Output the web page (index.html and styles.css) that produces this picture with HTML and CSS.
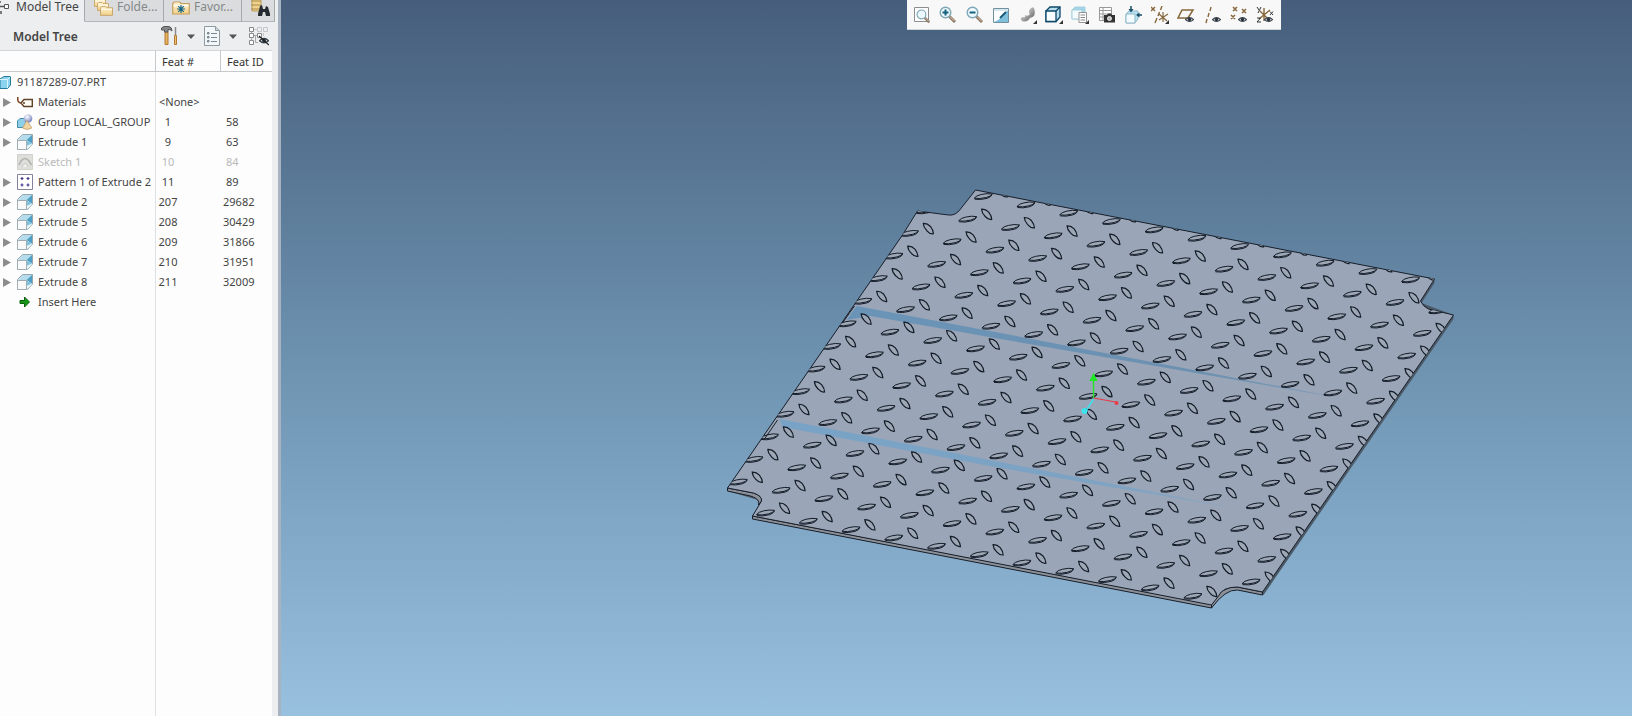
FILE: index.html
```
<!DOCTYPE html>
<html lang="en">
<head>
<meta charset="utf-8">
<title>91187289-07.PRT</title>
<link rel="stylesheet" href="styles.css">
</head>
<body>
<svg class="defs" aria-hidden="true">
  <defs>
    <linearGradient id="blueFace" x1="0" y1="0" x2="1" y2="1"><stop offset="0" stop-color="#d9f2fa"/><stop offset="1" stop-color="#4aa3c9"/></linearGradient>
    <linearGradient id="gold" x1="0" y1="0" x2="0" y2="1"><stop offset="0" stop-color="#fff6d8"/><stop offset="1" stop-color="#f3cf85"/></linearGradient>
    <linearGradient id="grey" x1="0" y1="0" x2="1" y2="1"><stop offset="0" stop-color="#f8f8f8"/><stop offset="1" stop-color="#555"/></linearGradient>
    <radialGradient id="ball" cx=".4" cy=".3" r=".7"><stop offset="0" stop-color="#fff"/><stop offset="1" stop-color="#7480c0"/></radialGradient>
    <symbol id="extrude" viewBox="0 0 16 16">
      <path d="M.5 5.500 5.500 .5H15.500V10L10.500 15.500H.5Z" fill="#e3eef2" stroke="#93a7ae"/>
      <path d="M5.500 1H15L9.500 6H1.500Z" fill="#b4dcec"/>
      <path d="M15 1V9.500L9.500 6Z" fill="#4f9fc4"/>
      <path d="M9 6 15 9.500 10 15Z" fill="#7fc2de"/>
      <path d="M9.500 12 15 9.500V10L10.500 15Z" fill="#eef8fb"/>
      <path d="M.5 6.500H9.500V15.500H.5Z" fill="#fafafa" stroke="#a0adb2"/>
    </symbol>
    <symbol id="arrow" viewBox="0 0 8 9"><path d="M0 0 8 4.500 0 9Z" fill="#8c8c8c"/></symbol>
    <symbol id="mag" viewBox="0 0 18 18">
      <path d="M10.500 10.500 16 16" stroke="#8b7663" stroke-width="3"/><path d="M11 10.500 15.500 15" stroke="#e4d0b4"/>
      <circle cx="6.500" cy="6.500" r="5.300" fill="#edf9fe" stroke="#7fa6b5" stroke-width="1.400"/>
    </symbol>
    <symbol id="eye" viewBox="0 0 10 7">
      <path d="M.5 3.700Q5-.8 9.500 3.700 5 7.700.5 3.700Z" fill="#eee" stroke="#39424b" stroke-width="1.300"/><circle cx="5" cy="3.500" r="1.900" fill="#28323c"/>
    </symbol>
    <symbol id="folder" viewBox="0 0 12 9">
      <path d="M.5 8.500V1.500L1.500 .5H5L6 1.500H11.500V8.500Z" fill="url(#gold)" stroke="#c39d5f" stroke-width=".8"/><path d="M1 3H11" stroke="#fffbea"/>
    </symbol>
  </defs>
</svg>
<div class="app">
  <aside class="side">
    <div class="panel">
      <div class="tabs" role="tablist">
        <button class="tab tab-model active" role="tab" aria-selected="true">
          <svg width="10" height="14" viewBox="0 0 10 14"><path d="M0 1V3M0 6.500H4M1 11V14" stroke="#555" stroke-width="1.500"/><path d="M4.500 4.500H8.500V8.500H4.500Z" fill="#fff" stroke="#555"/></svg>
          <span>Model Tree</span>
        </button>
        <button class="tab tab-folder" role="tab">
          <svg width="19" height="18" viewBox="0 0 19 18"><use href="#folder" width="12" height="9"/><use href="#folder" x="3" y="4" width="12" height="9"/><use href="#folder" x="6" y="8" width="13" height="10"/></svg>
          <span>Folde...</span>
        </button>
        <button class="tab tab-fav" role="tab">
          <svg width="18" height="18" viewBox="0 0 18 18"><use href="#folder" y="3" width="18" height="14"/><path d="M9 7V15M5 11H13M6.200 8.200 11.800 13.800M11.800 8.200 6.200 13.800" stroke="#176789" stroke-width="1.200"/></svg>
          <span>Favor...</span>
        </button>
        <button class="tab tab-find" role="tab" aria-label="Search">
          <svg width="20" height="20" viewBox="0 0 20 20"><path d="M2 0H11V14H2Z" fill="#efd38d" stroke="#b99a5c"/><path d="M1 4H11M1 8H11M1 12H9" stroke="#a98a4c"/><path d="M10 9 12 8 13 12H15L16 9 18 10 20 17V19H16L15 15H13L12 19H8V17Z" fill="#252b30"/></svg>
        </button>
      </div>
      <header class="head">
        <h1>Model Tree</h1>
        <div class="tools">
          <button aria-label="Settings"><svg width="18" height="20" viewBox="0 0 18 20"><path d="M4 6H7V18.500H4Z" fill="#e8b25c" stroke="#b07a35"/><path d="M.5 2 3 .5H8Q11 1 11 5L9 3.500H7V6H3.500V4H.5Z" fill="#888" stroke="#555"/><path d="M14.500 1V9" stroke="#888" stroke-width="1.500"/><path d="M13.500 9.500H15.500V18.500H13.500Z" fill="#efbe70" stroke="#b07a35"/></svg></button>
          <button class="drop" aria-label="Settings menu"><svg width="8" height="5" viewBox="0 0 8 5"><path d="M0 .5H8L4 5Z" fill="#555"/></svg></button>
          <button class="show" aria-label="Show"><svg width="17" height="20" viewBox="0 0 17 20"><path d="M.5 .5H11.500L15.500 4.500V19.500H.5Z" fill="#f3f7f9" stroke="#8f9ba3"/><path d="M11.500 .5V4.500H15.500" fill="#c9d3d8" stroke="#8f9ba3"/><path d="M7 7.500H13M7 11.500H13M7 15.500H13" stroke="#7b8b95"/><path d="M3.500 6.500H5V8H3.500ZM3.500 10.500H5V12H3.500ZM3.500 14.500H5V16H3.500Z" fill="#fff" stroke="#6d7f8b"/></svg></button>
          <button class="drop" aria-label="Show menu"><svg width="8" height="5" viewBox="0 0 8 5"><path d="M0 .5H8L4 5Z" fill="#555"/></svg></button>
          <button class="filter" aria-label="Tree filters"><svg width="20" height="20" viewBox="0 0 20 20"><g fill="#fff" stroke="#888"><path d="M.5 1.500H4.500V5.500H.5ZM.5 7.500H4.500V11.500H.5ZM.5 14.500H4.500V18.500H.5ZM8.500 7.500H12.500V11.500H8.500Z"/></g><g fill="none" stroke="#c4c7ca"><path d="M8.500 1.500H12.500V5.500H8.500ZM14.500 1.500H18.500V5.500H14.500ZM5 3.500H8M14.500 7V10"/></g><path d="M2.500 5.500V7.500M2.500 11.500V14.500M5 9.500H8M6.500 9.500V16.500H9" fill="none" stroke="#aaa"/><use href="#eye" x="10" y="11" width="10" height="7"/><path d="M10 10 20 19" stroke="#222" stroke-width="1.200"/></svg></button>
        </div>
      </header>
      <table class="tree">
        <colgroup><col class="c-name"><col class="c-num"><col class="c-id"></colgroup>
        <thead><tr><th aria-label="Name"></th><th>Feat #</th><th>Feat ID</th></tr></thead>
        <tbody>
          <tr class="root"><td><div class="node"><svg class="part" width="11" height="13" viewBox="0 0 11 13"><path d="M0 3 4 .5H10.500V9L7.500 12.500H0Z" fill="#8bd3ef" stroke="#247a9c"/><path d="M0 3.500H7.500V12M7.500 3.500 10.500 .5" fill="none" stroke="#d6f4ff"/></svg>91187289-07.PRT</div></td><td></td><td></td></tr>
          <tr><td><div class="node"><svg class="tw"><use href="#arrow"/></svg><svg class="ic" viewBox="0 0 16 16"><path d="M.8 3V6Q1 9 5 9" fill="none" stroke="#79421d" stroke-width="1.500"/><path d="M4 9 7 5.500H15.300V12.500H7Z" fill="#fffdf6" stroke="#60432b" stroke-width="1.400"/><circle cx="7" cy="9" r="1" fill="#60432b"/></svg>Materials</div></td><td class="none">&lt;None&gt;</td><td></td></tr>
          <tr><td><div class="node"><svg class="tw"><use href="#arrow"/></svg><svg class="ic" viewBox="0 0 16 16"><path d="M.5 7 3 4.500H9V11L7 13.500H.5Z" fill="#8fd0e9" stroke="#438aa7"/><circle cx="11" cy="4.500" r="4.300" fill="url(#ball)"/><path d="M10 6.500 14.800 14Q10 17 5.500 14Z" fill="#f0d5a0" stroke="#b79762" stroke-width=".7"/></svg>Group LOCAL_GROUP</div></td><td><span class="num">1</span></td><td class="short">58</td></tr>
          <tr><td><div class="node"><svg class="tw"><use href="#arrow"/></svg><svg class="ic"><use href="#extrude"/></svg>Extrude 1</div></td><td><span class="num">9</span></td><td class="short">63</td></tr>
          <tr class="off"><td><div class="node"><svg class="tw"></svg><svg class="ic" viewBox="0 0 16 16"><path d="M.5 .5H15.500V15.500H.5Z" fill="#dededa" stroke="#d2d2cd"/><path d="M2 11 4 7Q8 2 12 7L14.500 11" fill="none" stroke="#b0b0ad" stroke-width="1.500"/><path d="M5 13Q8 6 11 13" fill="#f2f2f0" stroke="#c4c4c0"/></svg>Sketch 1</div></td><td><span class="num">10</span></td><td class="short">84</td></tr>
          <tr><td><div class="node"><svg class="tw"><use href="#arrow"/></svg><svg class="ic" viewBox="0 0 16 16"><path d="M.5 .5H15.500V15.500H.5Z" fill="#fff" stroke="#83839c"/><path d="M3.500 4.500H6.500M5 3V6M9.500 4.500H12.500M11 3V6M3.500 11H6.500M5 9.500V12.500M9.500 11H12.500M11 9.500V12.500" stroke="#47358a" stroke-width="1.200"/></svg>Pattern 1 of Extrude 2</div></td><td><span class="num">11</span></td><td class="short">89</td></tr>
          <tr><td><div class="node"><svg class="tw"><use href="#arrow"/></svg><svg class="ic"><use href="#extrude"/></svg>Extrude 2</div></td><td><span class="num">207</span></td><td>29682</td></tr>
          <tr><td><div class="node"><svg class="tw"><use href="#arrow"/></svg><svg class="ic"><use href="#extrude"/></svg>Extrude 5</div></td><td><span class="num">208</span></td><td>30429</td></tr>
          <tr><td><div class="node"><svg class="tw"><use href="#arrow"/></svg><svg class="ic"><use href="#extrude"/></svg>Extrude 6</div></td><td><span class="num">209</span></td><td>31866</td></tr>
          <tr><td><div class="node"><svg class="tw"><use href="#arrow"/></svg><svg class="ic"><use href="#extrude"/></svg>Extrude 7</div></td><td><span class="num">210</span></td><td>31951</td></tr>
          <tr><td><div class="node"><svg class="tw"><use href="#arrow"/></svg><svg class="ic"><use href="#extrude"/></svg>Extrude 8</div></td><td><span class="num">211</span></td><td>32009</td></tr>
          <tr><td><div class="node"><svg class="tw"></svg><svg class="ic" viewBox="0 0 16 16"><path d="M3 6.500H7.500V3L12.500 8 7.500 13V9.500H3Z" fill="#169616" stroke="#0b5f0b"/></svg>Insert Here</div></td><td></td><td></td></tr>
          <tr class="fill"><td></td><td></td><td></td></tr>
        </tbody>
      </table>
    </div>
  </aside>
  <main class="view">
    <svg class="scene" viewBox="280 0 1352 716" preserveAspectRatio="xMidYMid slice" role="img" aria-label="Tread plate model">
      <defs>
        <clipPath id="face"><path d="M975 190 1434 279 1420 301Q1423 307 1428 309L1453 315 1262 592 1237 587Q1222 587 1218 596L1211 605 752 516 761 501Q762 496 753 493L727 488 902 235 917 211 948 215Q955 216 960 209Z"/></clipPath>
        <linearGradient id="fade" gradientUnits="userSpaceOnUse" x1="855" y1="0" x2="1350" y2="0"><stop offset="0" stop-color="#6a94b7"/><stop offset=".7" stop-color="#6c90b0"/><stop offset="1" stop-color="#7e9bb8"/></linearGradient>
        <linearGradient id="fade2" gradientUnits="userSpaceOnUse" x1="780" y1="0" x2="1250" y2="0"><stop offset="0" stop-color="#78a3c6"/><stop offset=".7" stop-color="#7ea3c3"/><stop offset="1" stop-color="#90a5bc"/></linearGradient>
        <g id="bumps" fill="#9da7b5" stroke="#141c28">
          <path d="M-9 2.200Q-7-.5-2-1.500 4-3 9-2 8 .2 3 1.500-4 3.200-9 2.200Z"/><path d="M-8.500 3.200Q-3 4.200 4 2.300 8 1 9-1.500" fill="none"/>
          <path d="M-1.600 13.200Q2.500 13 5.500 16.200 8.500 20 8.500 23.500 5 24 2 20.500-1.500 17-1.600 13.200Z" stroke-width="1.200"/>
        </g>
      </defs>
      <path d="M975 190 1434 279V283L1421 303 1453 315V319L1263 595 1237 590Q1225 589 1220 596L1211 608 752 519V516L761 501 727 491V488L902 235 1000 260Z" fill="#4c5967"/>
      <path d="M752 516 1211 604V608L752 519ZM727 488 753 493Q762 496 761 501L758 505 Q760 499 750 496L727 491ZM1237 587 1262 592V595L1237 590Q1225 589 1211 608V604Q1220 586 1237 587Z" fill="#8c9199" stroke="#18202c"/>
      <path d="M975 190 1434 279 1420 301Q1423 307 1428 309L1453 315 1262 592 1237 587Q1222 587 1218 596L1211 605 752 516 761 501Q762 496 753 493L727 488 902 235 917 211 948 215Q955 216 960 209Z" fill="#9aa5b7" stroke="#18202c"/>
      <g clip-path="url(#face)">
        <path d="M856 306 1000 333 1350 400 1000 339 870 316 846 320Z" fill="url(#fade)"/>
        <path d="M779 419 1000 462 1250 511 1000 468 782 427Z" fill="url(#fade2)"/>
        <g id="tread"></g>
      </g>
      <path d="M854 306 842 323M777 420 764 439" stroke="#18202c"/>
      <path d="M1093 398V378" stroke="#20e828" stroke-width="1.400"/><path d="M1093 375 1095.500 380H1090.500Z" fill="#20e828" stroke="#20e828" stroke-width="2"/>
      <path d="M1093 398 1115 402" stroke="#e83c48" stroke-width="1.200"/><circle cx="1116" cy="403" r="2" fill="#e83c48"/>
      <path d="M1093 399 1086 410" stroke="#3ce4ee" stroke-width="1.400"/><circle cx="1084" cy="411" r="3" fill="#3ce4ee"/>
    </svg>
    <div class="toolbar" role="toolbar" aria-label="Graphics">
      <button aria-label="Refit"><svg viewBox="0 0 18 18"><path d="M1.500 1.500H15.500V15.500H1.500Z" fill="#fff" stroke="#8c8f91"/><use href="#mag" x="3" y="3" width="15" height="15"/></svg></button>
      <button aria-label="Zoom in"><svg viewBox="0 0 18 18"><use href="#mag" width="18" height="18"/><path d="M3.500 6.500H9.500M6.500 3.500V9.500" stroke="#12617f" stroke-width="2"/></svg></button>
      <button aria-label="Zoom out"><svg viewBox="0 0 18 18"><use href="#mag" width="18" height="18"/><path d="M3.500 6.500H9.500" stroke="#12617f" stroke-width="2"/></svg></button>
      <button aria-label="Repaint"><svg viewBox="0 0 18 18"><path d="M1.500 2.500H16.500V16.500H1.500Z" fill="#fff" stroke="#71909f"/><path d="M16 3V16H2Q10 13 16 3Z" fill="#7fc0dc"/><path d="M2 3H16V5H2Z" fill="#d5e6ee"/><path d="M8 12 14 6" stroke="#1b5877" stroke-width="2"/></svg></button>
      <button aria-label="Rendering"><svg viewBox="0 0 18 18"><path d="M11 3Q15-1 15.500 4 17 11 11 12 8 17 3 15 0 12 4 11 7 12 6 9 9 11 11 8 9 6 11 3Z" fill="url(#grey)"/><path d="M18 14V18H14Z" fill="#333"/></svg></button>
      <button aria-label="Display style"><svg viewBox="0 0 18 18"><path d="M1 5 5 1H15V11L11 15.500H1Z" fill="#b8deef" stroke="#0d4868" stroke-width="1.300"/><path d="M1 5H11V15.500H1Z" fill="#f8fdff" stroke="#0d4868" stroke-width="1.300"/><path d="M11 5 15 1" stroke="#0d4868" stroke-width="1.300"/><path d="M18 14V18H14Z" fill="#333"/></svg></button>
      <button aria-label="Saved views"><svg viewBox="0 0 18 18"><path d="M1 4 4 1H14V9L11 13H1Z" fill="#9fd5e9" stroke="#a9cfdc"/><path d="M1 4H11V13H1Z" fill="#f4fbfe" stroke="#a9cfdc"/><path d="M8 6.500H15.500V16.500H8Z" fill="#fff" stroke="#959595"/><path d="M9.500 9H14M9.500 11.500H14M9.500 14H14" stroke="#888"/><path d="M18 14V18H14Z" fill="#333"/></svg></button>
      <button aria-label="View manager"><svg viewBox="0 0 18 18"><path d="M1.500 1.500H13.500V14.500H1.500ZM1.500 4.500H13.500M1.500 8H13M1.500 11H9M5 2V14" fill="#fff" stroke="#999"/><path d="M6 9H9L10 7.500H13L14 9H17V16.500H6Z" fill="#333"/><circle cx="11.500" cy="12.500" r="2" fill="#bbb" stroke="#eee"/></svg></button>
      <button aria-label="Annotations"><svg viewBox="0 0 18 18"><path d="M2 8 5 5H14V13L11 17H2Z" fill="#b7e2f2" stroke="#8fb9c8"/><path d="M2 8H11V17H2Z" fill="#f3fbfe" stroke="#8fb9c8"/><path d="M7 0V5M18 9H14" stroke="#174c65" stroke-width="1.500"/><path d="M4.500 3H9.500L7 6.500ZM15.500 6.500V11.500L12 9Z" fill="#174c65"/></svg></button>
      <button aria-label="Datum display"><svg viewBox="0 0 18 18"><path d="M0 1 4 5M4 1 0 5M11 0 9.500 4M8.500 6 7 10M6 12 4 17" stroke="#86683c" stroke-width="1.400"/><path d="M12 6V16M8 14 17 8M8 8 16 15" stroke="#86683c" stroke-width="1.200"/><path d="M18 14V18H14Z" fill="#333"/></svg></button>
      <button aria-label="Plane display"><svg viewBox="0 0 18 18"><path d="M5 4H16L11 12H1Z" fill="none" stroke="#86683c" stroke-width="1.500"/><use href="#eye" x="8" y="10" width="9" height="7"/></svg></button>
      <button aria-label="Axis display"><svg viewBox="0 0 18 18"><path d="M7 1 6 5M5 7 4 11M3 13 2 17" stroke="#86683c" stroke-width="1.400"/><use href="#eye" x="8" y="10" width="9" height="7"/></svg></button>
      <button aria-label="Point display"><svg viewBox="0 0 18 18"><path d="M3 1 7 5M7 1 3 5M12 3 16 7M16 3 12 7M1 9 5 13M5 9 1 13" stroke="#86683c" stroke-width="1.500"/><use href="#eye" x="8" y="10" width="9" height="7"/></svg></button>
      <button aria-label="Csys display"><svg viewBox="0 0 18 18"><path d="M8 2V15M3 13 14 4M4 5 12 13" stroke="#86683c" stroke-width="1.400"/><path d="M1 1 3 4M5 1 2 7M14 5.500 17 9M17 5.500 14 9M1 12H4.500L1 16H5" fill="none" stroke="#333"/><use href="#eye" x="8" y="10" width="9" height="7"/></svg></button>
    </div>
  </main>
</div>
<script src="tread.js"></script>
</body>
</html>
```
FILE: styles.css
```
* { box-sizing: border-box; }
body { margin: 0; font-family: "Noto Sans", "Open Sans", sans-serif; font-size: 12px; color: #444; }
button { margin: 0; padding: 0; border: 0; background: none; font: inherit; color: inherit; }
svg { display: block; flex: none; }
.defs { position: absolute; width: 0; height: 0; }
.app { display: flex; height: 100vh; overflow: hidden; }
.side { flex: none; width: 281px; padding-right: 3px; background: #eceeef; border-right: 3px solid #a7b3c0; }
.panel { display: flex; flex-direction: column; height: 100%; }
.tabs { display: flex; flex: none; height: 22px; }
.tab { display: flex; align-items: center; gap: 4px; height: 22px; padding-bottom: 7px; border-right: 1px solid #a6a9ab; border-bottom: 1px solid #b3b6b8; background: #dadcde; color: #85888a; line-height: 14px; white-space: nowrap; }
.tab.active { border-bottom-color: #eceeef; background: #eceeef; color: #444; }
.tab-model { width: 85px; gap: 6px; }
.tab-folder { width: 79px; padding-left: 9px; }
.tab-fav { width: 78px; padding-left: 8px; }
.tab-find { flex: 1; padding-left: 8px; }
.head { display: flex; flex: none; align-items: center; height: 28px; padding: 0 6px 0 13px; }
.head h1 { flex: 1; margin: 0; font-size: 12px; font-weight: 600; }
.tools { display: flex; align-items: center; }
.drop { padding: 0 9px 0 8px; }
.drop + .filter { margin-left: 3px; }
.tree { flex: 1; width: 272px; border-collapse: separate; border-spacing: 0; table-layout: fixed; background: #fdfdfd; font-size: 11px; }
.c-name { width: 156px; }
.c-num { width: 65px; }
.c-id { width: 51px; }
.tree th { height: 22px; padding: 2px 0 0 6px; border-top: 1px solid #d4d6d8; border-bottom: 1px solid #c6cacd; border-right: 1px solid #c6cacd; color: #333; font-weight: 400; text-align: left; line-height: 18px; white-space: nowrap; }
.tree th:last-child { border-right: 0; }
.tree td { height: 20px; padding: 0 0 0 2px; line-height: 20px; white-space: nowrap; }
.tree td:first-child { padding: 0; border-right: 1px solid #dfe3e6; }
.tree .fill td { height: auto; }
.tree td.short { padding-left: 5px; }
.tree td.none { padding-left: 3px; }
.num { display: block; width: 20px; text-align: center; }
.node { display: flex; align-items: center; padding-left: 3px; }
.root .node { padding: 0; }
.part { margin-right: 6px; }
.tw { width: 8px; height: 9px; margin-right: 6px; }
.ic { width: 16px; height: 16px; margin-right: 5px; }
.off { color: #b9b9b9; }
.view { position: relative; flex: 1; min-width: 0; background: linear-gradient(#465e7b, #6e94b2 52%, #98c0df); }
.scene { width: 100%; height: 100%; }
.toolbar { position: absolute; top: 0; right: 26%; display: flex; width: 374px; height: 30px; padding: 0 2px; background: #f8f8f9; border-bottom: 1px solid #cfd5db; }
.toolbar button { display: flex; flex: 1; align-items: center; justify-content: center; }
.toolbar svg { width: 18px; height: 18px; }
```
FILE: tread.js
```
const layer = document.getElementById("tread");
const origin = [982.7, 196];
const across = [42.73, 8.33];
const down = [-15.55, 22.6];
for (let row = -3; row < 22; row++) {
  for (let col = -3; col < 14; col++) {
    const x = origin[0] + across[0] * col + down[0] * row;
    const y = origin[1] + across[1] * col + down[1] * row;
    const bump = document.createElementNS("http://www.w3.org/2000/svg", "use");
    bump.setAttribute("href", "#bumps");
    bump.setAttribute("transform", `translate(${x} ${y})`);
    layer.append(bump);
  }
}
```
